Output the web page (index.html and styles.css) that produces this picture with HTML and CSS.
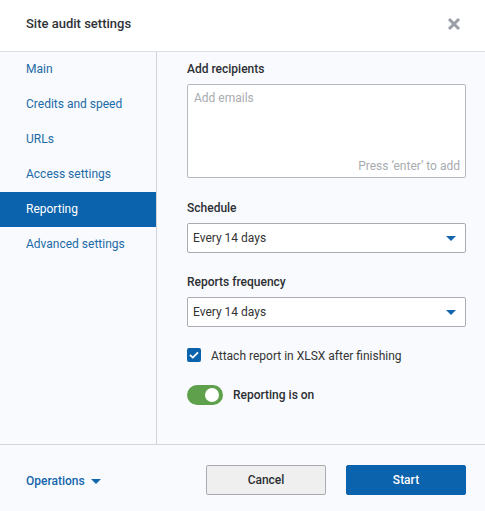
FILE: index.html
```html
<!DOCTYPE html>
<html>
<head>
<meta charset="utf-8">
<link rel="stylesheet" href="styles.css">
</head>
<body>
<div class="dialog">
  <header class="head">
    <div class="title">Site audit settings</div>
    <svg class="close" width="14" height="14" viewBox="0 0 14 14"><path d="M2 2 L12 12 M12 2 L2 12" stroke="#9a9ea5" stroke-width="3" stroke-linecap="butt"/></svg>
  </header>
  <div class="body">
    <nav class="side">
      <a class="item">Main</a>
      <a class="item">Credits and speed</a>
      <a class="item">URLs</a>
      <a class="item">Access settings</a>
      <a class="item active">Reporting</a>
      <a class="item">Advanced settings</a>
    </nav>
    <section class="content">
      <div class="label">Add recipients</div>
      <div class="textarea">
        <span class="ph">Add emails</span>
        <span class="hint">Press ‘enter’ to add</span>
      </div>
      <div class="label mt22">Schedule</div>
      <div class="select"><span>Every 14 days</span><span class="caret"></span></div>
      <div class="label mt21">Reports frequency</div>
      <div class="select"><span>Every 14 days</span><span class="caret"></span></div>
      <div class="check-row">
        <span class="checkbox"><svg width="10" height="8" viewBox="0 0 10 8"><path d="M1 4 L3.8 6.6 L9 1.3" fill="none" stroke="#fff" stroke-width="1.8"/></svg></span>
        <span class="check-label">Attach report in XLSX after finishing</span>
      </div>
      <div class="toggle-row">
        <span class="toggle"><span class="knob"></span></span>
        <span class="toggle-label">Reporting is on</span>
      </div>
    </section>
  </div>
  <footer class="foot">
    <a class="ops">Operations <span class="caret"></span></a>
    <div class="btns">
      <button class="btn cancel">Cancel</button>
      <button class="btn start">Start</button>
    </div>
  </footer>
</div>
</body>
</html>
```
FILE: styles.css
```css
* { box-sizing: border-box; }
html, body { margin: 0; padding: 0; }
body {
  font-family: Roboto, "Liberation Sans", sans-serif;
  font-size: 12px;
  color: #333;
  background: #f8fafd;
}
.dialog {
  width: 485px;
  height: 511px;
  display: flex;
  flex-direction: column;
  background: #f8fafd;
}
.head {
  height: 52px;
  flex: none;
  background: #fff;
  border-bottom: 1px solid #dcdfe5;
  display: flex;
  align-items: center;
  justify-content: space-between;
  padding: 0 24px 0 26px;
}
.title {
  font-size: 13px;
  font-weight: 500;
  color: #2f3237;
  margin-top: -5px;
}
.close { margin-top: -4px; }
.body {
  flex: 1;
  display: flex;
  min-height: 0;
}
.side {
  width: 157px;
  flex: none;
  border-right: 1px solid #cfd3d9;
  display: flex;
  flex-direction: column;
}
.item {
  height: 35px;
  line-height: 34px;
  padding-left: 26px;
  color: #1c6aa8;
}
.item.active {
  background: #0b63ad;
  color: #fff;
}
.content {
  flex: 1;
  padding: 9px 19px 0 30px;
  display: flex;
  flex-direction: column;
}
.label {
  font-weight: 500;
  line-height: 16px;
  color: #2c2f33;
  margin-bottom: 7px;
}
.mt22 { margin-top: 22px; }
.mt21 { margin-top: 21px; }
.textarea {
  height: 94px;
  background: #fff;
  border: 1px solid #b5b9bf;
  border-radius: 2px;
  position: relative;
  padding: 6px 6px;
}
.ph { color: #a8abb0; }
.hint {
  position: absolute;
  right: 5px;
  bottom: 4px;
  color: #a8abb0;
}
.select {
  height: 30px;
  background: #fff;
  border: 1px solid #a9adb3;
  border-radius: 2px;
  display: flex;
  align-items: center;
  justify-content: space-between;
  padding: 0 9px 0 5px;
  color: #333;
}
.caret {
  width: 0;
  height: 0;
  border-left: 5px solid transparent;
  border-right: 5px solid transparent;
  border-top: 5px solid #1466ac;
  display: inline-block;
}
.check-row {
  margin-top: 21px;
  display: flex;
  align-items: center;
  gap: 10px;
  height: 14px;
}
.check-label { margin-top: 2px; }
.checkbox {
  width: 14px;
  height: 14px;
  border-radius: 2px;
  background: #0b63ad;
  display: flex;
  align-items: center;
  justify-content: center;
}
.toggle-row {
  margin-top: 23px;
  display: flex;
  align-items: center;
  gap: 10px;
}
.toggle {
  width: 36px;
  height: 20px;
  border-radius: 10px;
  background: #5ea04c;
  position: relative;
}
.knob {
  position: absolute;
  right: 4px;
  top: 3px;
  width: 14px;
  height: 14px;
  border-radius: 50%;
  background: #fff;
}
.toggle-label { font-weight: 500; color: #2c2f33; }
.foot {
  height: 67px;
  flex: none;
  border-top: 1px solid #d3d7dd;
  display: flex;
  align-items: center;
  justify-content: space-between;
  padding: 4px 19px 0 26px;
}
.ops {
  color: #1466ac;
  font-weight: 500;
  display: flex;
  align-items: center;
  gap: 6px;
  margin-top: 2px;
}
.btns { display: flex; gap: 20px; }
.btn {
  width: 120px;
  height: 30px;
  font-family: Roboto, "Liberation Sans", sans-serif;
  font-size: 12px;
  font-weight: 500;
  border-radius: 2px;
}
.cancel {
  background: #efefef;
  border: 1px solid #a8acb1;
  color: #2c2f33;
}
.start {
  background: #0b63ad;
  border: 1px solid #0b63ad;
  color: #fff;
}
```
